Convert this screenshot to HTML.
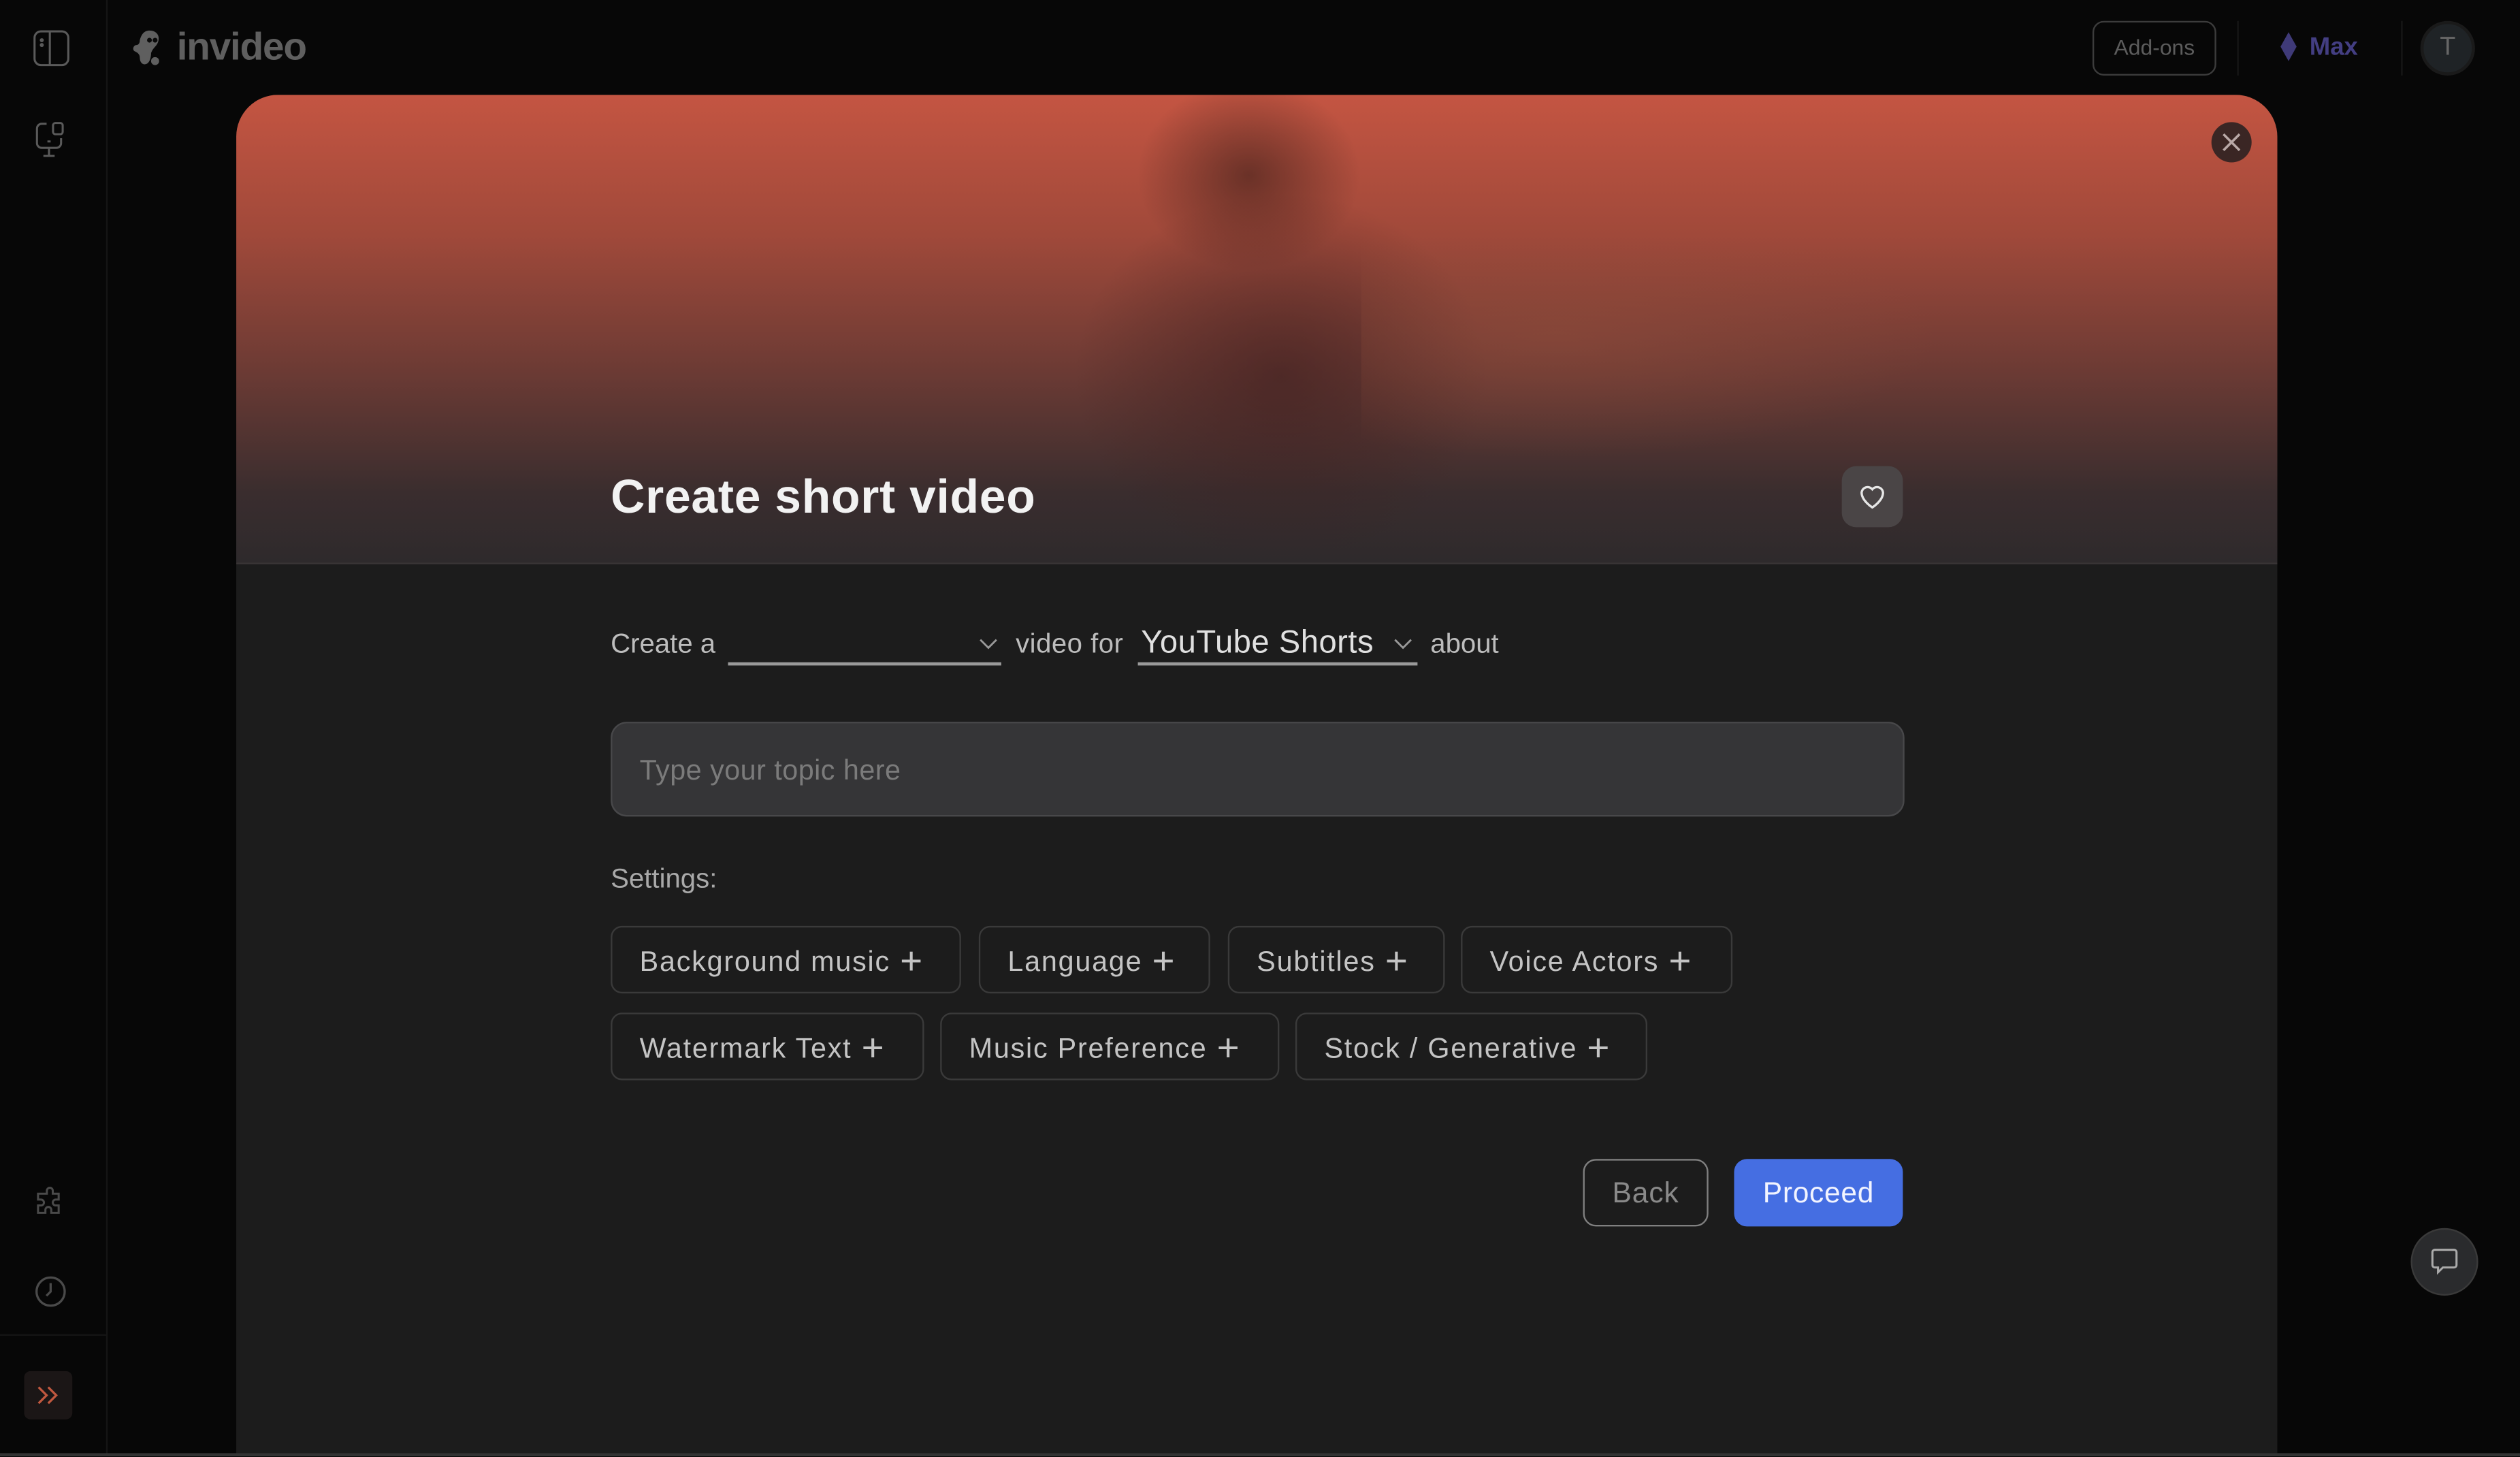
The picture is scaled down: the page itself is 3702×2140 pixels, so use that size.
<!DOCTYPE html>
<html><head><meta charset="utf-8"><style>
html,body{margin:0;padding:0;background:#070707;overflow:hidden;width:3702px;height:2140px}
#w{position:absolute;left:0;top:0;width:1568px;height:906.4px;transform:scale(2.36097);transform-origin:0 0;font-family:"Liberation Sans",sans-serif;background:#070707;overflow:hidden}
.a{position:absolute}
.chip{position:absolute;height:42px;border:1px solid #3a3a3a;border-radius:7px;box-sizing:border-box;color:#c4c4c4;font-size:17.5px;line-height:40px;padding-left:17px;letter-spacing:.75px;white-space:nowrap}
.chip b{font-weight:300;font-size:24px;position:relative;top:2px;margin-left:6px}
</style></head><body><div id="w">
<div class="a" style="left:66px;top:0;width:1px;height:906px;background:#151515"></div>
<div class="a" style="left:0;top:830px;width:66px;height:1px;background:#151515"></div>
<svg class="a" style="left:20px;top:18px" width="24" height="24" viewBox="0 0 24 24" fill="none" stroke="#5a5a5a" stroke-width="1.3"><rect x="1.5" y="1.5" width="21" height="21" rx="4"/><path d="M11 1.5v21"/><circle cx="6" cy="7" r=".6" fill="#5a5a5a"/><circle cx="6" cy="10" r=".6" fill="#5a5a5a"/></svg>
<svg class="a" style="left:20px;top:75px" width="24" height="24" viewBox="0 0 24 24" fill="none" stroke="#5a5a5a" stroke-width="1.3"><path d="M9 2H6a3 3 0 0 0-3 3v9a3 3 0 0 0 3 3h9a3 3 0 0 0 3-3v-3"/><rect x="13" y="1.5" width="6" height="7" rx="1.5"/><path d="M10.5 17v5M7 22h7M9.5 13h2"/></svg>
<svg class="a" style="left:20px;top:738px" width="22" height="22" viewBox="0 0 24 24" fill="none" stroke="#4a4a4a" stroke-width="1.4"><path d="M10 3a2 2 0 0 1 4 0v2h4v4h-2a2 2 0 0 0 0 4h2v5h-5v-2a2 2 0 0 0-4 0v2H4v-5h2a2 2 0 0 0 0-4H4V5h6z"/></svg>
<svg class="a" style="left:21px;top:793px" width="21" height="21" viewBox="0 0 24 24" fill="none" stroke="#4a4a4a" stroke-width="1.6"><circle cx="12" cy="12" r="10"/><path d="M12 6v6l-3 3"/></svg>
<div class="a" style="left:15px;top:853px;width:30px;height:30px;background:#1b1616;border-radius:4px"></div>
<svg class="a" style="left:20px;top:858px" width="20" height="20" viewBox="0 0 20 20" fill="none" stroke="#c0583f" stroke-width="1.4"><path d="M4 5l5 5-5 5M10 5l5 5-5 5"/></svg>
<svg class="a" style="left:82px;top:18px" width="24" height="24" viewBox="0 0 24 24" fill="#5f5f5f"><path d="M11 1c5 0 7 4 5 8-1 2-3 3-4 6 0 3-1 7-4 7-2 0-3-2-3-4 0-2-1-3-3-4C0 13 1 10 3 10c1 0 2-1 2-3 1-4 3-6 6-6z"/><circle cx="14.5" cy="20" r="2.5"/><circle cx="11" cy="7" r="1.5" fill="#0a0a0a"/><circle cx="14.5" cy="7" r="1.5" fill="#0a0a0a"/></svg>
<div class="a" style="left:110px;top:16px;color:#5f5f5f;font-size:24px;font-weight:bold;letter-spacing:-0.5px">invideo</div>
<div class="a" style="left:1302px;top:13px;width:77px;height:34px;border:1.3px solid #3c3c3c;border-radius:7px;box-sizing:border-box;color:#5c5c5c;font-size:13.5px;text-align:center;line-height:31px">Add-ons</div>
<div class="a" style="left:1392px;top:13px;width:1px;height:34px;background:#161616"></div>
<div class="a" style="left:1494px;top:13px;width:1px;height:34px;background:#161616"></div>
<div class="a" style="left:1417px;top:19px;width:14px;height:20px"><svg width="14" height="20" viewBox="0 0 14 20"><path d="M7 1l5 9-5 9-5-9z" fill="#3f3a78"/></svg></div>
<div class="a" style="left:1437px;top:21px;color:#433e82;font-size:15.5px;font-weight:bold">Max</div>
<div class="a" style="left:1506px;top:13px;width:34px;height:34px;border-radius:50%;background:#1f2326;border:2px solid #1a1a1a;box-sizing:border-box;color:#666;text-align:center;line-height:30px;font-size:16px">T</div>
<div class="a" style="left:147px;top:59px;width:1270px;height:845px;border-radius:26px 26px 0 0;background:#1c1c1c;overflow:hidden">
 <div class="a" style="left:0;top:0;width:1270px;height:291px;background:linear-gradient(180deg,#c45542 0%,#a0493a 30%,#6a3a34 60%,#3a2d2e 85%,#2e2a2c 100%)"></div>
 <div class="a" style="left:560px;top:-10px;width:140px;height:120px;border-radius:50%;background:radial-gradient(ellipse at center,rgba(60,30,25,.6) 0%,rgba(60,30,25,0) 70%)"></div>
 <div class="a" style="left:520px;top:60px;width:260px;height:230px;border-radius:40%;background:radial-gradient(ellipse at center,rgba(60,30,30,.6) 0%,rgba(60,30,30,0) 70%)"></div>
 <div class="a" style="left:700px;top:90px;width:400px;height:150px;background:radial-gradient(ellipse at 30% 40%,rgba(150,80,60,.4) 0%,rgba(150,80,60,0) 60%)"></div>
 <div class="a" style="left:0;top:291px;width:1270px;height:1px;background:#3a3536"></div>
 <div class="a" style="left:1229px;top:17px;width:25px;height:25px;border-radius:50%;background:#3a2624"></div>
 <svg class="a" style="left:1233px;top:21px" width="17" height="17" viewBox="0 0 17 17" stroke="#b9a9a7" stroke-width="1.5"><path d="M3.5 3.5l10 10M13.5 3.5l-10 10"/></svg>
 <div class="a" style="left:233px;top:234px;color:#f2f2f2;font-size:29.5px;font-weight:bold;letter-spacing:.3px">Create short video</div>
 <div class="a" style="left:999px;top:231px;width:38px;height:38px;border-radius:9px;background:#4a4546"></div>
 <svg class="a" style="left:1008px;top:240px" width="20" height="20" viewBox="0 0 24 24" fill="none" stroke="#e6e6e6" stroke-width="1.7"><path d="M12 20s-8-5-8-11a4.5 4.5 0 0 1 8-2.5A4.5 4.5 0 0 1 20 9c0 6-8 11-8 11z"/></svg>
 <div class="a" style="left:233px;top:332px;color:#bdbdbd;font-size:17px">Create a</div>
 <div class="a" style="left:306px;top:353px;width:170px;height:2px;background:#9a9a9a"></div>
 <svg class="a" style="left:461px;top:335px" width="14" height="12" viewBox="0 0 14 12" fill="none" stroke="#999" stroke-width="1.2"><path d="M2 4l5 5 5-5"/></svg>
 <div class="a" style="left:485px;top:332px;color:#bdbdbd;font-size:17px;letter-spacing:.2px">video for</div>
 <div class="a" style="left:563px;top:330px;color:#e0e0e0;font-size:20px;letter-spacing:.2px">YouTube Shorts</div>
 <div class="a" style="left:561px;top:353px;width:174px;height:2px;background:#9a9a9a"></div>
 <svg class="a" style="left:719px;top:335px" width="14" height="12" viewBox="0 0 14 12" fill="none" stroke="#999" stroke-width="1.2"><path d="M2 4l5 5 5-5"/></svg>
 <div class="a" style="left:743px;top:332px;color:#bdbdbd;font-size:17px">about</div>
 <div class="a" style="left:233px;top:390px;width:805px;height:59px;border-radius:10px;background:#353537;border:1px solid #48484a;box-sizing:border-box"></div>
 <div class="a" style="left:251px;top:410px;color:#7b7b7b;font-size:17.5px;letter-spacing:.2px">Type your topic here</div>
 <div class="a" style="left:233px;top:478px;color:#a9a9a9;font-size:17px">Settings:</div>
 <div class="chip" style="left:233px;top:517px;width:218px">Background music<b>+</b></div>
 <div class="chip" style="left:462px;top:517px;width:144px">Language<b>+</b></div>
 <div class="chip" style="left:617px;top:517px;width:135px">Subtitles<b>+</b></div>
 <div class="chip" style="left:762px;top:517px;width:169px">Voice Actors<b>+</b></div>
 <div class="chip" style="left:233px;top:571px;width:195px">Watermark Text<b>+</b></div>
 <div class="chip" style="left:438px;top:571px;width:211px">Music Preference<b>+</b></div>
 <div class="chip" style="left:659px;top:571px;width:219px">Stock / Generative<b>+</b></div>
 <div class="a" style="left:838px;top:662px;width:78px;height:42px;border:1.3px solid #808080;border-radius:8px;box-sizing:border-box;color:#8a8a8a;font-size:18px;text-align:center;line-height:40px;letter-spacing:.4px">Back</div>
 <div class="a" style="left:932px;top:662px;width:105px;height:42px;border-radius:8px;background:#456ee2;color:#f2f4ff;font-size:18px;text-align:center;line-height:42px;letter-spacing:.3px">Proceed</div>
</div>
<div class="a" style="left:1500px;top:764px;width:42px;height:42px;border-radius:50%;background:#2a2b2d;border:1px solid #3a3a3a;box-sizing:border-box"></div>
<svg class="a" style="left:1512px;top:776px" width="18" height="19" viewBox="0 0 18 19" fill="none" stroke="#aaa" stroke-width="1.3"><path d="M3 1.5h12a1.5 1.5 0 0 1 1.5 1.5v8a1.5 1.5 0 0 1-1.5 1.5H8l-3 3v-3H3A1.5 1.5 0 0 1 1.5 11V3A1.5 1.5 0 0 1 3 1.5z"/></svg>
<div class="a" style="left:0;top:904px;width:1568px;height:3px;background:#333"></div>
</div></body></html>
